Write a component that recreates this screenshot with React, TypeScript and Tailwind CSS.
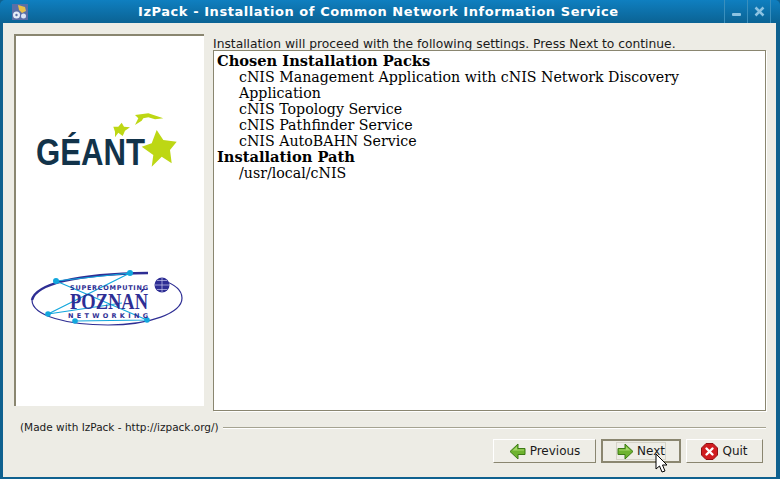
import React from 'react';

const ArrowIcon = ({ flip }: { flip?: boolean }) => (
  <svg width="17" height="17" viewBox="0 0 17 17" className={flip ? '-scale-x-100' : ''}>
    <path d="M1 5.500h7V1l8 7.500L8 16v-4.500H1z" fill="#6eb32f" stroke="#3d7a16" strokeWidth="1" />
    <path d="M2 6.500h7V3.500l4.500 4H2z" fill="#a5d86a" />
  </svg>
);

const QuitIcon = () => (
  <svg width="17" height="17" viewBox="0 0 17 17">
    <path d="M5 .5h7L16.500 5v7L12 16.500H5L.5 12V5z" fill="#d01c1f" stroke="#8f1114" />
    <path d="M5.500 5.500l6 6M11.500 5.500l-6 6" stroke="#fff" strokeWidth="2.400" strokeLinecap="round" />
  </svg>
);

const AppIcon = () => (
  <svg width="16" height="16" viewBox="0 0 16 16">
    <rect width="16" height="16" fill="#5a6fa8" />
    <path d="M6 1l7 2 1 4-4 2-3-3z" fill="#e8c04a" />
    <circle cx="4.500" cy="11" r="3.500" fill="#e6ecf7" />
    <circle cx="11.500" cy="12" r="2.500" fill="#dbe4f5" />
    <circle cx="4.500" cy="11" r="1.200" fill="#5a6fa8" />
  </svg>
);

const GeantLogo = () => (
  <svg width="150" height="62" viewBox="0 0 150 62" className="block">
    <text x="0" y="52" fontFamily="'Liberation Sans', sans-serif" fontSize="36" fontWeight="700" fill="#12334a" textLength="109" lengthAdjust="spacingAndGlyphs">GÉANT</text>
    <path d="M105.700 33.700l10-3.400 5-13.300 6.600 10 13.400 1.700-6.700 8.300 1.700 13.300-10-6.600-10 10 1.600-11.700z" fill="#bdd714" />
    <path d="M77.300 13.700h5l3.400-4 2.300 4 6 .6-5 3.400-2.300 5.300-4.400-3.300-3.300 4.600v-5.600z" fill="#bdd714" />
    <path d="M99 12l3.300-6.700L99 2l13.300-1.700 15 5-8.300 1-6.700-2-5 1-1.600 2.400z" fill="#bdd714" />
  </svg>
);

const PoznanLogo = () => (
  <svg width="155" height="58" viewBox="0 0 155 58" className="block">
    <path d="M2 30C6 14 45 4 118 3" fill="none" stroke="#2e2e94" strokeWidth="2.500" />
    <path d="M2 30c0 16 36 25 76 25 42 0 74-12 74-27 0-8-8-14-20-18" fill="none" stroke="#2e2e94" strokeWidth="1.200" />
    <path d="M26 11l91 39M18 44l82-41M18 44l74-11M45 51l72-1M26 11l74-8" fill="none" stroke="#12a7dd" strokeWidth="1.200" />
    <g fill="#12a7dd">
      <circle cx="26" cy="11" r="3" /><circle cx="100" cy="3" r="3" />
      <circle cx="18" cy="44" r="2.800" /><circle cx="45" cy="51" r="2.800" /><circle cx="117" cy="50" r="2.800" />
    </g>
    <text x="40" y="20" fontFamily="'DejaVu Sans', sans-serif" fontSize="6.500" fontWeight="700" fill="#2e2e94" textLength="78" lengthAdjust="spacing">SUPERCOMPUTING</text>
    <text x="40" y="39" fontFamily="'Liberation Serif', serif" fontSize="24" fontWeight="700" fill="#2e2e94" textLength="78" lengthAdjust="spacingAndGlyphs">POZNAŃ</text>
    <text x="38" y="48" fontFamily="'DejaVu Sans', sans-serif" fontSize="6.500" fontWeight="700" fill="#2e2e94" textLength="80" lengthAdjust="spacing">NETWORKING</text>
    <circle cx="132" cy="15" r="7.500" fill="#2e2e94" />
    <path d="M125 15h15M132 8v14M127 10.500h10M127 19.500h10" stroke="#c9c9ee" strokeWidth="0.700" />
  </svg>
);

const Cursor = () => (
  <svg width="13" height="20" viewBox="0 0 13 20" className="absolute left-[655px] top-[453px]">
    <path d="M1 1v15l3.500-3 2.500 6 3-1-2.500-6H12z" fill="#fff" stroke="#000" strokeWidth="1" />
  </svg>
);

const buttonClass =
  "h-[24px] flex items-center justify-center gap-[4px] bg-[#eeede6] border text-[12px] text-[#1a1a1a]";
const raised = "border-t-white border-l-white border-r-[#8a8670] border-b-[#8a8670]";

export default function App() {
  return (
    <div className="relative w-[780px] h-[479px] flex flex-col bg-[#0f618f] font-['DejaVu_Sans',sans-serif] overflow-hidden">
      <div className="h-[23px] shrink-0 flex items-center bg-gradient-to-b from-[#0f7fc0] to-[#0b6394] rounded-t-[5px]">
        <div className="w-[37px] pl-[12px] flex shrink-0"><AppIcon /></div>
        <div className="flex-1 pl-[101px] text-[13px] leading-none font-bold tracking-[0.56px] text-white whitespace-nowrap">
          IzPack - Installation of Common Network Information Service
        </div>
        <div className="flex h-full shrink-0 mr-[9px]">
          <div className="w-[23px] flex items-center justify-center border-l border-[#3a8fbd]">
            <div className="w-[9px] h-[3px] mt-[5px] bg-[#8cc3e2] rounded-[1px]" />
          </div>
          <div className="w-[24px] flex items-center justify-center border-x border-[#3a8fbd] text-[#8cc3e2]">
            <svg width="11" height="11" viewBox="0 0 11 11">
              <path d="M1.500 1.500l8 8M9.500 1.500l-8 8" stroke="currentColor" strokeWidth="2.500" />
            </svg>
          </div>
        </div>
      </div>

      <div className="flex-1 ml-[3px] mr-[4px] mb-[2px] bg-[#edece5] flex flex-col pl-[11px] pr-[10px]">
        <div className="flex gap-[9px] pt-[11px]">
          <div className="w-[190px] h-[372px] bg-white border-t-2 border-l-2 border-[#8a8670] flex flex-col items-start">
            <div className="mt-[77px] ml-[20px]"><GeantLogo /></div>
            <div className="mt-[95px] ml-[14px]"><PoznanLogo /></div>
          </div>
          <div className="w-[553px] flex flex-col">
            <div className="h-[16px] text-[12.3px] leading-[21px] text-[#1a1a1a] whitespace-nowrap">
              Installation will proceed with the following settings. Press Next to continue.
            </div>
            <div className="h-[361px] bg-white border border-[#8a8670] shadow-[1px_1px_0_#fff] pl-[3px] pt-[2px] font-['DejaVu_Serif',serif] text-[14.2px] leading-[16px] text-black">
              <div className="font-bold text-[14.65px]">Chosen Installation Packs</div>
              <div className="pl-[22px]">
                <div className="w-[490px]">cNIS Management Application with cNIS Network Discovery Application</div>
                <div>cNIS Topology Service</div>
                <div>cNIS Pathfinder Service</div>
                <div>cNIS AutoBAHN Service</div>
              </div>
              <div className="font-bold text-[14.65px]">Installation Path</div>
              <div className="pl-[22px]">/usr/local/cNIS</div>
            </div>
          </div>
        </div>

        <div className="mt-[10px] flex items-center gap-[4px] pl-[6px] h-[12px]">
          <span className="text-[10.5px] leading-none text-[#1a1a1a] whitespace-nowrap">(Made with IzPack - http://izpack.org/)</span>
          <div className="flex-1 mt-[1px] border-t border-b border-t-[#a5a391] border-b-white" />
        </div>

        <div className="mt-[6px] flex justify-end gap-[5px] pr-[3px]">
          <div className={`${buttonClass} ${raised} w-[103px]`}><ArrowIcon flip />Previous</div>
          <div className={`${buttonClass} w-[80px] border-2 border-[#8a8670] border-r-[#8a8670]`}>
            <div className="w-[50px] h-[18px] flex items-center gap-[3px] border border-[#d5d3c8] whitespace-nowrap">
              <ArrowIcon />Next
            </div>
          </div>
          <div className={`${buttonClass} ${raised} w-[77px]`}><QuitIcon />Quit</div>
        </div>
      </div>
      <Cursor />
    </div>
  );
}
